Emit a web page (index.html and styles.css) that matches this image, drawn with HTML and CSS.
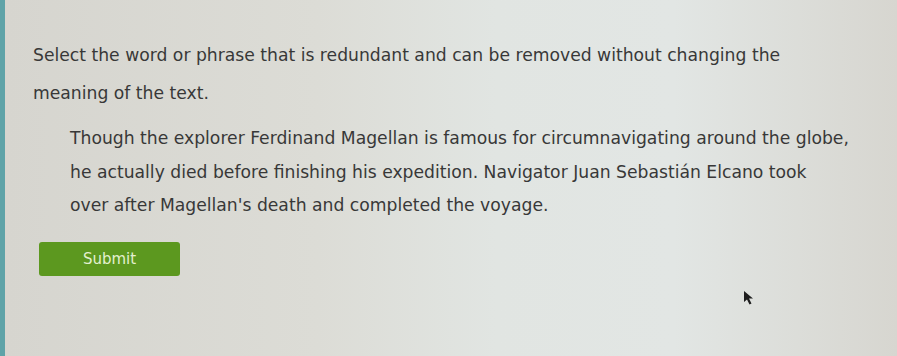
FILE: index.html
```html
<!DOCTYPE html>
<html lang="en">
<head>
    <meta charset="UTF-8">
    <title>Redundancy Question</title>
    <link rel="stylesheet" href="styles.css">
</head>
<body>

<div class="screen">
    <p class="prompt">Select the word or phrase that is redundant and can be removed without changing the meaning of the text.</p>

    <p class="passage">Though the explorer Ferdinand Magellan is famous for circumnavigating around the globe, he actually died before finishing his expedition. Navigator Juan Sebastián Elcano took over after Magellan's death and completed the voyage.</p>

    <button class="button-submit">Submit</button>

    <!-- mouse pointer sitting over the page -->
    <svg class="pointer" width="12" height="16" viewBox="0 0 12 16">
        <path d="M1 1 L1 12 L4 9.5 L6.5 14.5 L8.5 13.5 L6 8.5 L10 8.5 Z" fill="#1e1e1e"/>
    </svg>
</div>

</body>
</html>
```

FILE: styles.css
```css
body {
    margin: 0;
    font-family: "DejaVu Sans", Verdana, sans-serif;
}
.screen {
    position: relative;
    height: 356px;
    box-sizing: border-box;
    padding: 36px 0 0 28px;
    border-left: 5px solid #5fa3a8;
    background: linear-gradient(90deg, #d6d5cf 0%, #dcdcd6 35%, #e1e5e2 55%, #e2e6e4 75%, #d7d6d0 100%);
    color: #383838;
}
.prompt {
    margin: 0;
    width: 770px;
    font-size: 17.2px;
    line-height: 38px;
}
.passage {
    margin: 10px 0 0 37px;
    width: 780px;
    font-size: 17.2px;
    line-height: 33.5px;
}
.button-submit {
    margin: 19px 0 0 6px;
    width: 141px;
    height: 34px;
    border: none;
    border-radius: 3px;
    background-color: #5c981f;
    color: #e3f0cf;
    font-family: "DejaVu Sans", Verdana, sans-serif;
    font-size: 15px;
    cursor: pointer;
}
.pointer {
    position: absolute;
    left: 738px;
    top: 290px;
}
```
